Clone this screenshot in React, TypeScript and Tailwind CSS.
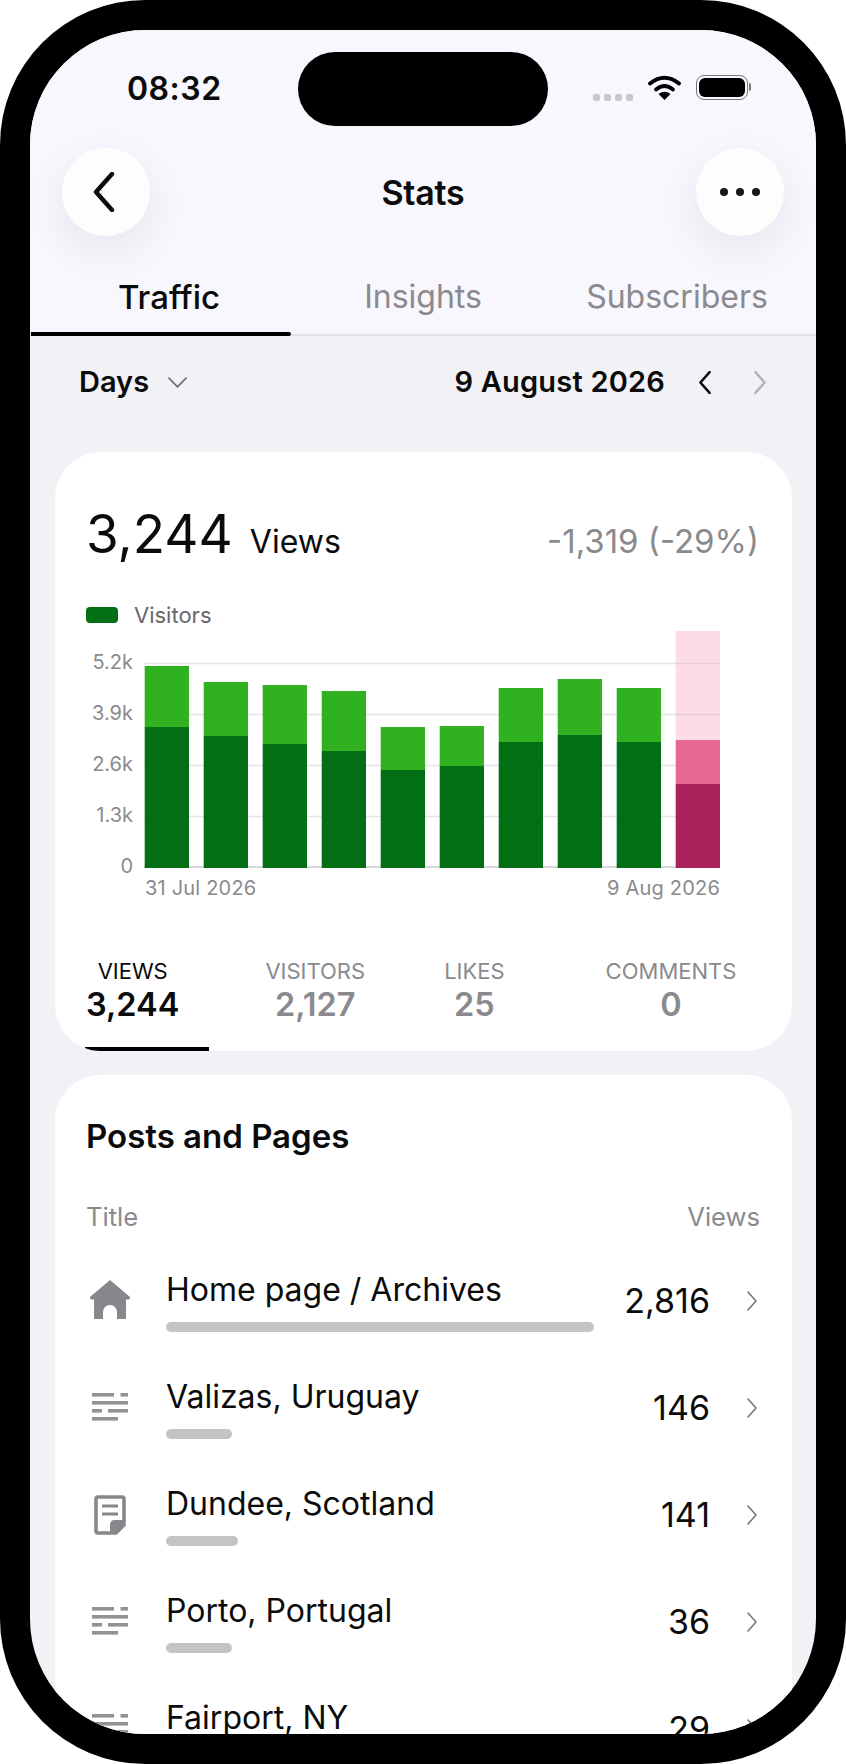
const bars = [
  { light: 666, dark: 727 },
  { light: 682, dark: 736 },
  { light: 685, dark: 744 },
  { light: 691, dark: 751 },
  { light: 727, dark: 770 },
  { light: 726, dark: 766 },
  { light: 688, dark: 742 },
  { light: 679, dark: 735 },
  { light: 688, dark: 742 },
];

const posts = [
  { title: 'Home page / Archives', views: '2,816', bar: 428, icon: 'home' },
  { title: 'Valizas, Uruguay', views: '146', bar: 66, icon: 'post' },
  { title: 'Dundee, Scotland', views: '141', bar: 72, icon: 'page' },
  { title: 'Porto, Portugal', views: '36', bar: 66, icon: 'post' },
  { title: 'Fairport, NY', views: '29', bar: 66, icon: 'post' },
];

const stats = [
  { label: 'VIEWS', value: '3,244', active: true, cls: '' },
  { label: 'VISITORS', value: '2,127', active: false, cls: 'ml-[86px]' },
  { label: 'LIKES', value: '25', active: false, cls: 'ml-[79px]' },
  { label: 'COMMENTS', value: '0', active: false, cls: 'ml-[101px]' },
];

const Chevron = ({ dir, className, width = 2 }: { dir: 'left' | 'right' | 'down'; className: string; width?: number }) => {
  const points = dir === 'left' ? '10,1 2,10 10,19' : dir === 'right' ? '2,1 10,10 2,19' : '1,1 10,10 19,1';
  const box = dir === 'down' ? '0 0 20 11' : '0 0 12 20';
  return (
    <svg viewBox={box} className={className} fill="none" stroke="currentColor" strokeWidth={width} strokeLinecap="round" strokeLinejoin="round">
      <polyline points={points} />
    </svg>
  );
};

const PostIcon = ({ type }: { type: string }) => {
  if (type === 'home') {
    return (
      <svg viewBox="0 0 40 39" className="w-[40px] h-[39px] mb-[3px] text-[#87878c]" fill="currentColor">
        <path d="M20 0 L40 17 Q40.5 19.5 38 19.5 L36 19.5 L36 39 L27 39 L27 32 A7 7 0 0 0 13 32 L13 39 L4 39 L4 19.5 L2 19.5 Q-0.5 19.5 0 17 Z" />
      </svg>
    );
  }
  if (type === 'page') {
    return (
      <svg viewBox="0 0 32 40" className="w-[32px] h-[40px] text-[#87878c]" fill="none" stroke="currentColor">
        <path d="M22 38 L4 38 Q2 38 2 36 L2 4 Q2 2 4 2 L28 2 Q30 2 30 4 L30 30 Z" strokeWidth="3.6" strokeLinejoin="round" />
        <path d="M8 11 H24 M8 19 H24" strokeWidth="3" />
        <path d="M16 38 L16 30 Q16 25 21 25 L30 25 L30 30 L22 39 Z" fill="currentColor" stroke="none" />
      </svg>
    );
  }
  return (
    <svg viewBox="0 0 36 28" className="w-[36px] h-[28px] mb-[2px] text-[#939397]" fill="currentColor">
      <rect x="0" y="0" width="22" height="3.6" />
      <rect x="28.5" y="0" width="7.5" height="3.6" />
      <rect x="0" y="8" width="36" height="3.6" />
      <rect x="0" y="16" width="10" height="3.6" />
      <rect x="16" y="16" width="20" height="3.6" />
      <rect x="0" y="24" width="26" height="3.6" />
    </svg>
  );
};

const StatusIcons = () => (
  <div className="flex items-center">
    <div className="flex gap-[4px] mt-[20px]">
      <span className="w-[7px] h-[7px] rounded-[2px] bg-[#c9c9cd]" />
      <span className="w-[7px] h-[7px] rounded-[2px] bg-[#c9c9cd]" />
      <span className="w-[7px] h-[7px] rounded-[2px] bg-[#c9c9cd]" />
      <span className="w-[7px] h-[7px] rounded-[2px] bg-[#c9c9cd]" />
    </div>
    <svg viewBox="0 0 33 25" className="w-[33px] h-[25px] ml-[15px]">
      <path d="M2 8.5 Q16.5 -3 31 8.5" fill="none" stroke="black" strokeWidth="3.8" strokeLinecap="round" />
      <path d="M8 14.5 Q16.5 7.5 25 14.5" fill="none" stroke="black" strokeWidth="3.8" strokeLinecap="round" />
      <path d="M10.5 19 Q16.5 14.5 22.5 19 L16.5 25 Z" fill="black" />
    </svg>
    <div className="flex items-center ml-[15px]">
      <div className="w-[52px] h-[25px] rounded-[8px] border border-[#77777a] p-[2px]">
        <div className="w-full h-full rounded-[6px] bg-black" />
      </div>
      <div className="w-[2px] h-[8px] rounded-r-full bg-[#77777a] ml-[1px]" />
    </div>
  </div>
);

const App = () => {
  return (
    <div className="w-[846px] h-[1764px] bg-white font-[family-name:Inter,sans-serif]">
      <div className="w-full h-full bg-black rounded-[145px] p-[30px]">
        <div className="h-full rounded-[115px] overflow-hidden bg-[#f1f1f6] text-[#0b0b0c]">
          <header className="bg-[#f7f7fd] border-b-2 border-[#e1e1e6] relative">
            <div className="flex items-center pt-[22px] pl-[97px] pr-[65px]">
              <div className="w-[171px] text-[32px] leading-[36px] font-semibold tracking-[0.5px]">08:32</div>
              <div className="w-[250px] h-[74px] rounded-full bg-black" />
              <div className="ml-auto mb-[4px]">
                <StatusIcons />
              </div>
            </div>
            <div className="flex items-center justify-between mt-[22px] px-[32px]">
              <button className="w-[88px] h-[88px] rounded-full bg-[#fdfdfe] flex items-center justify-center shadow-[0_14px_40px_rgba(30,30,60,0.08)]">
                <Chevron dir="left" width={2.2} className="w-[24px] h-[40px] mr-[4px]" />
              </button>
              <h1 className="text-[34px] font-semibold tracking-[-0.2px]">Stats</h1>
              <button className="w-[88px] h-[88px] rounded-full bg-[#fdfdfe] flex items-center justify-center gap-[8px] shadow-[0_14px_40px_rgba(30,30,60,0.08)]">
                <span className="w-[8px] h-[8px] rounded-full bg-[#141416]" />
                <span className="w-[8px] h-[8px] rounded-full bg-[#141416]" />
                <span className="w-[8px] h-[8px] rounded-full bg-[#141416]" />
              </button>
            </div>
            <div className="grid grid-cols-3 h-[98px] text-[32px] leading-[40px] text-[#8a8a8f]">
              <div className="pl-[16px] pt-[41px] text-center text-[33px] font-medium text-[#0b0b0c]">Traffic</div>
              <div className="pt-[41px] text-center">Insights</div>
              <div className="pr-[16px] pt-[41px] text-center">Subscribers</div>
            </div>
            <div className="absolute left-[1px] bottom-[-2px] w-[260px] h-[4px] rounded-r-full bg-black" />
          </header>

          <div className="flex items-center h-[92px] pl-[49px] pr-[49px]">
            <span className="text-[29px] font-semibold">Days</span>
            <Chevron dir="down" width={1.8} className="w-[19px] h-[11px] ml-[19px] text-[#6d6d72]" />
            <span className="ml-auto text-[29px] font-semibold tracking-[0.2px]">9 August 2026</span>
            <Chevron dir="left" width={2.2} className="w-[14px] h-[23px] ml-[33px]" />
            <Chevron dir="right" width={2.2} className="w-[14px] h-[23px] ml-[41px] text-[#b4b4b8]" />
          </div>

          <section className="relative overflow-hidden ml-[25px] mr-[24px] mt-[24px] h-[599px] bg-white rounded-[46px] px-[31px] pt-[50px]">
            <div className="flex items-baseline h-[64px]">
              <span className="text-[53px] leading-[64px]">3,244</span>
              <span className="text-[32px] ml-[17px]">Views</span>
              <span className="ml-auto mr-[2px] text-[33px] text-[#8a8a8e]">-1,319 (-29%)</span>
            </div>
            <div className="flex items-center h-[24px] mt-[37px]">
              <span className="w-[32px] h-[16px] rounded-[4px] bg-[#036f15]" />
              <span className="ml-[16px] text-[22px] text-[#67676b]">Visitors</span>
            </div>
            <div className="flex items-start mt-[4px]">
              <div className="w-[47px] h-[224px] mt-[21px] flex flex-col justify-between items-end text-[20px] leading-[20px] text-[#8a8a8e]">
                <span>5.2k</span>
                <span>3.9k</span>
                <span>2.6k</span>
                <span>1.3k</span>
                <span>0</span>
              </div>
              <svg viewBox="144 631 576 237" className="w-[576px] h-[237px] ml-[11px] shrink-0">
                {[663, 714, 765, 816].map((y) => (
                  <line key={y} x1="144" x2="720" y1={y + 0.5} y2={y + 0.5} stroke="#e4e4e7" strokeWidth="1.5" />
                ))}
                <line x1="144" x2="720" y1="867" y2="867" stroke="#d8d8dc" strokeWidth="2" />
                {bars.map((b, i) => (
                  <g key={i}>
                    <rect x={144.7 + i * 59} y={b.light} width="44.3" height={b.dark - b.light} fill="#30b220" />
                    <rect x={144.7 + i * 59} y={b.dark} width="44.3" height={868 - b.dark} fill="#036f15" />
                  </g>
                ))}
                <rect x="675.7" y="631" width="44.3" height="109" fill="#f6a8c6" fillOpacity="0.4" />
                <rect x="675.7" y="740" width="44.3" height="44" fill="#ea6896" />
                <rect x="675.7" y="784" width="44.3" height="84" fill="#a9225a" />
              </svg>
            </div>
            <div className="flex justify-between ml-[59px] w-[575px] text-[20px] leading-[24px] tracking-[0.2px] text-[#8a8a8e]">
              <span>31 Jul 2026</span>
              <span>9 Aug 2026</span>
            </div>
            <div className="flex mt-[57px]">
              {stats.map((s) => (
                <div key={s.label} className={`${s.cls} flex flex-col items-center ${s.active ? 'text-[#0b0b0c]' : 'text-[#8a8a8e]'}`}>
                  <span className="text-[22px] leading-[28px]">{s.label}</span>
                  <span className="text-[32.5px] leading-[39px] font-semibold">{s.value}</span>
                </div>
              ))}
            </div>
            <div className="absolute left-[30px] bottom-0 w-[124px] h-[4px] bg-black" />
          </section>

          <section className="ml-[25px] mr-[24px] mt-[24px] bg-white rounded-[46px] pl-[31px] pr-[32px] pt-[40px] pb-[40px]">
            <h2 className="text-[33px] leading-[42px] font-semibold">Posts and Pages</h2>
            <div className="flex justify-between h-[30px] mt-[45px] text-[25.6px] leading-[30px] text-[#8a8a8e]">
              <span>Title</span>
              <span>Views</span>
            </div>
            <div className="mt-[15px] pr-[2px]">
              {posts.map((p) => (
                <div key={p.title} className="flex items-center h-[107px]">
                  <div className="w-[48px] flex justify-center">
                    <PostIcon type={p.icon} />
                  </div>
                  <div className="w-[428px] ml-[32px]">
                    <div className="text-[32px] leading-[40px]">{p.title}</div>
                    <div className="h-[10px] rounded-full bg-[#c4c4c6] mt-[12px]" style={{ width: p.bar }} />
                  </div>
                  <div className="flex-1 text-right text-[34px] leading-[40px]">{p.views}</div>
                  <Chevron dir="right" width={1.6} className="w-[12px] h-[20px] ml-[36px] text-[#77777c]" />
                </div>
              ))}
            </div>
          </section>
        </div>
      </div>
    </div>
  );
};

export default App;
